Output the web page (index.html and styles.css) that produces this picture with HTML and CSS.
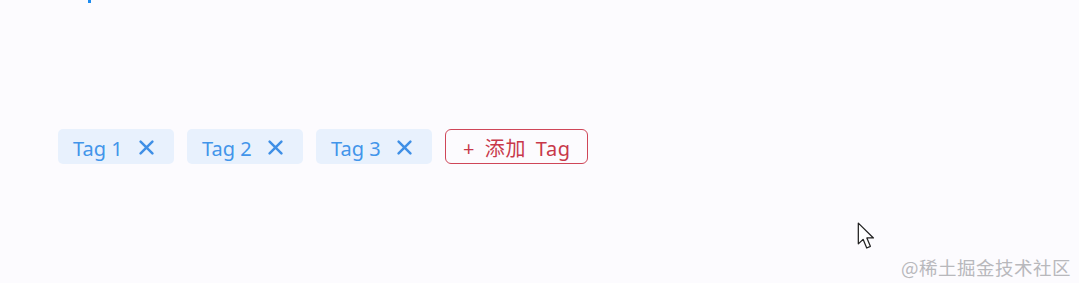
FILE: index.html
```html
<!DOCTYPE html>
<html lang="zh">
<head>
<meta charset="utf-8">
<link rel="stylesheet" href="styles.css">
</head>
<body>
<div class="page">
  <div class="heading-mark"></div>
  <div class="tags">
    <span class="tag"><span class="tag-text">Tag 1</span><svg class="close" viewBox="0 0 14 14"><path d="M1.5 1.5 L12.5 12.5 M12.5 1.5 L1.5 12.5"/></svg></span>
    <span class="tag"><span class="tag-text">Tag 2</span><svg class="close" viewBox="0 0 14 14"><path d="M1.5 1.5 L12.5 12.5 M12.5 1.5 L1.5 12.5"/></svg></span>
    <span class="tag"><span class="tag-text">Tag 3</span><svg class="close" viewBox="0 0 14 14"><path d="M1.5 1.5 L12.5 12.5 M12.5 1.5 L1.5 12.5"/></svg></span>
    <button class="add-btn">+ 添加 Tag</button>
  </div>
  <svg class="cursor" viewBox="0 0 14 20"><path d="M0.8 0.8 L0.8 15.6 L4.2 12.4 L6.8 18.6 L9.4 17.4 L6.9 11.4 L11.6 11.4 Z"/></svg>
  <div class="watermark">@稀土掘金技术社区</div>
</div>
</body>
</html>
```
FILE: styles.css
```css
html, body {
  margin: 0;
  padding: 0;
  background: #fcfbfe;
}
.page {
  position: relative;
  width: 1079px;
  height: 283px;
  overflow: hidden;
  font-family: "Noto Sans", "Noto Sans CJK SC", sans-serif;
}
.heading-mark {
  margin-left: 88px;
  width: 3px;
  height: 3px;
  background: #1d8cf0;
}
.tags {
  display: flex;
  align-items: center;
  gap: 13px;
  margin-top: 126px;
  padding-left: 58px;
}
.tag {
  display: flex;
  align-items: center;
  gap: 16px;
  width: 116px;
  height: 35px;
  box-sizing: border-box;
  padding: 0 0 0 15px;
  background: #e8f1fd;
  border-radius: 5px;
  color: #4295ea;
  font-size: 20px;
}
.tag-text {
  line-height: 1;
  padding-top: 4px;
}
.close {
  width: 15px;
  height: 15px;
  margin-top: 1px;
  fill: none;
  stroke: #3f8fe6;
  stroke-width: 2.3;
  stroke-linecap: round;
}
.add-btn {
  height: 35px;
  box-sizing: border-box;
  padding: 5px 16px 0 17px;
  border: 1.6px solid #cf4658;
  border-radius: 6px;
  background: transparent;
  color: #c8384a;
  font-family: "Noto Sans", "Noto Sans CJK SC", sans-serif;
  font-size: 20px;
  line-height: 1;
  word-spacing: 4px;
  letter-spacing: 0.6px;
}
.cursor {
  position: absolute;
  left: 857px;
  top: 222px;
  width: 20px;
  height: 28px;
  fill: #ffffff;
  stroke: #222222;
  stroke-width: 0.9;
  stroke-linejoin: round;
}
.watermark {
  position: absolute;
  right: 8px;
  top: 254px;
  color: #b8b8bc;
  font-family: "Noto Sans CJK SC", sans-serif;
  font-size: 18.5px;
  line-height: 26px;
  letter-spacing: 0.5px;
}
```
